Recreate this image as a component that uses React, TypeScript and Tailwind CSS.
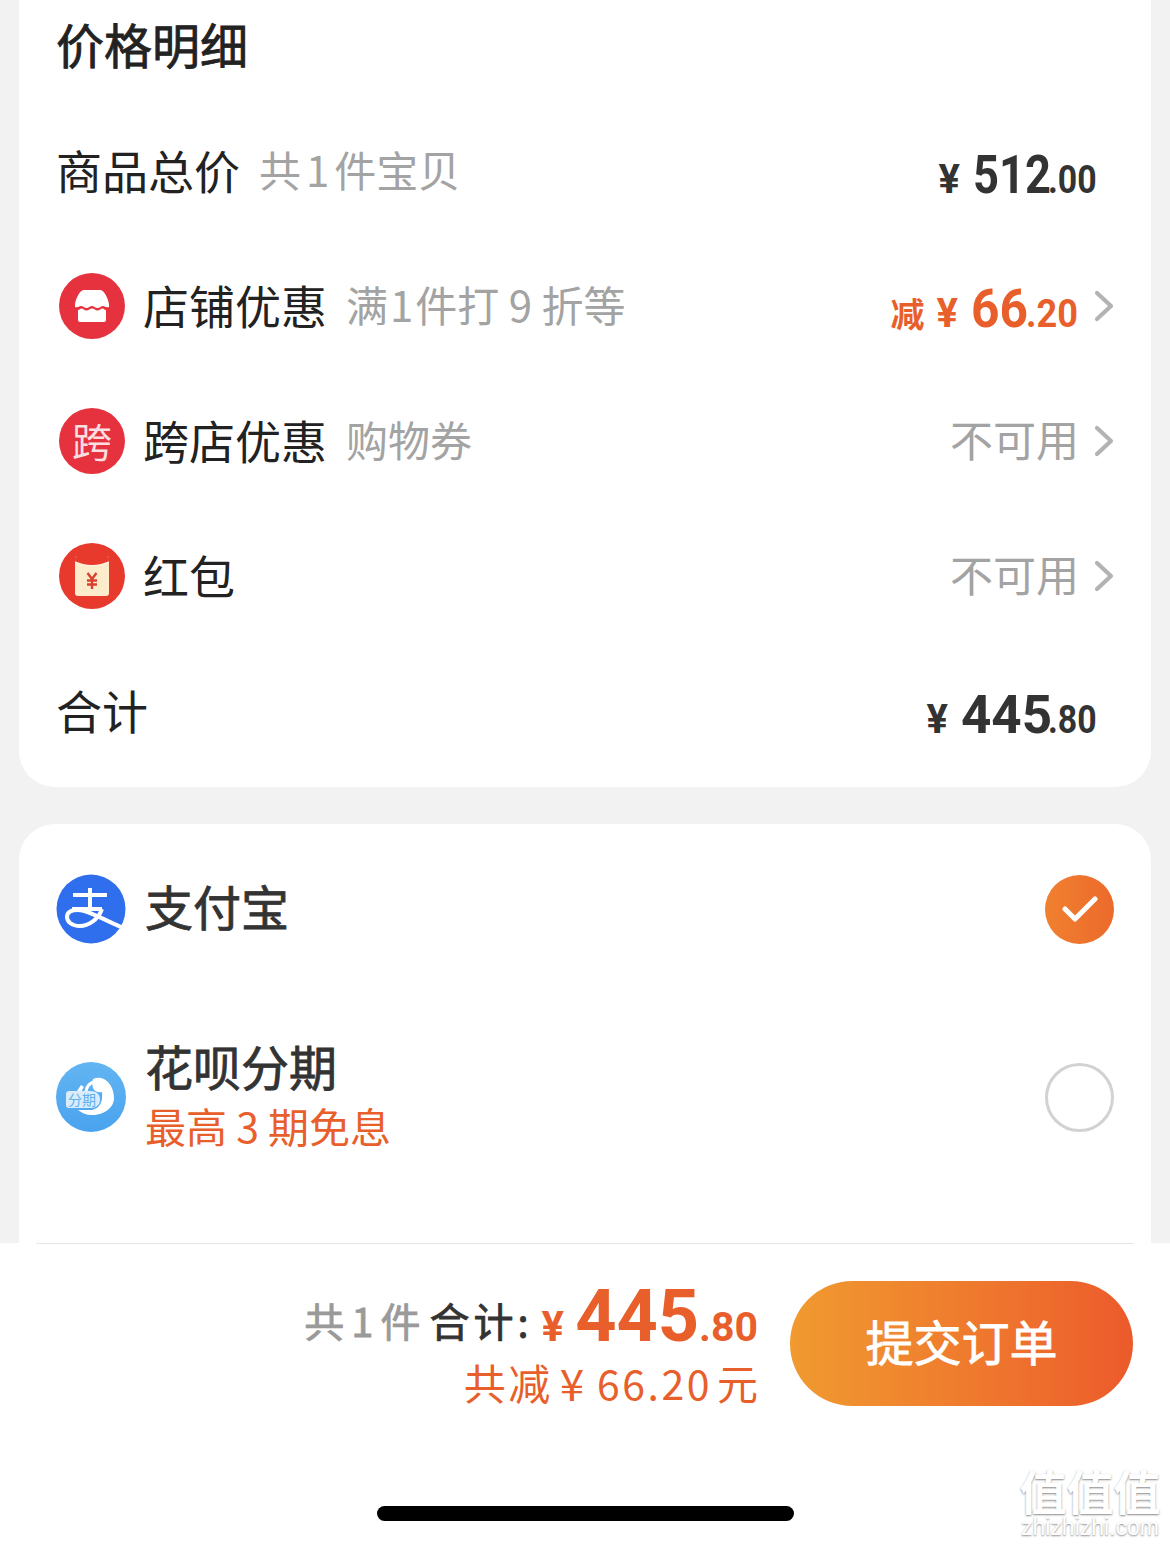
import React from "react";

const cjk = "font-['Noto_Sans_CJK_SC','Noto_Sans',sans-serif]";
const num = "font-['Roboto','Noto_Sans_CJK_SC',sans-serif]";
const medium = "[-webkit-text-stroke:0.8px_currentColor]";

const Chevron = () => (
  <svg width="20" height="32" viewBox="0 0 20 32" fill="none" className="ml-[15px]">
    <path d="M3 3l14 13L3 29" stroke="#b3b3b3" strokeWidth="4.200" strokeLinecap="round" strokeLinejoin="round" />
  </svg>
);

const ShopIcon = () => (
  <div className="w-[66px] h-[66px] rounded-full bg-[#e6323e] flex items-center justify-center">
    <svg width="34" height="32" viewBox="0 0 34 32">
      <path d="M9 0h16c4 0 8 8 9 14v3c-3 1-4-1-6-1s-3 2-5.500 2S19 16 17 16s-3.500 2-5.500 2S8 16 6 16s-3 2-6 1v-3C1 8 5 0 9 0z" fill="#fff" />
      <path d="M3 20c2 0 2-1.500 3.500-1.500s3 2 5 2 3.500-2 5.500-2 3.500 2 5.500 2 3.500-2 5-2 1.500 1.500 3.500 1.500v10a2 2 0 0 1-2 2H5a2 2 0 0 1-2-2z" fill="#fff" />
    </svg>
  </div>
);

const CrossIcon = () => (
  <div className="w-[66px] h-[66px] rounded-full bg-[#e6323e] flex items-center justify-center">
    <span className={`${cjk} pb-[2px] text-[40px] leading-none text-[#fbdfe0]`}>跨</span>
  </div>
);

const PacketIcon = () => (
  <div className="w-[66px] h-[66px] rounded-full bg-[#e8392d] flex items-center justify-center">
    <svg width="34" height="40" viewBox="0 0 34 40">
      <rect x="0" y="0" width="34" height="40" rx="3" fill="#fdeccb" />
      <path d="M0 3a3 3 0 0 1 3-3h28a3 3 0 0 1 3 3v3c-10 5-24 5-34 0z" fill="#e8392d" />
      <path d="M0 6c10 5 24 5 34 0" stroke="#fff3dd" strokeWidth="1.500" fill="none" />
      <path d="M12.500 17l4.500 6 4.500-6M12 24.500h10M12 28.500h10M17 23v10" stroke="#d9402e" strokeWidth="2.400" fill="none" />
    </svg>
  </div>
);

const AlipayIcon = () => (
  <svg width="70" height="70" viewBox="0 0 70 70">
    <circle cx="35" cy="35" r="34.500" fill="#2f6fed" />
    <path d="M17 21h34M34 14v21M16 35h30" stroke="#fff" strokeWidth="4" fill="none" />
    <path d="M46 35C42 46 32 52 24 52 15 52 11 47 11 43 11 38 16 36 22 36 32 36 44 44 65 53" stroke="#fff" strokeWidth="4" fill="none" />
  </svg>
);

const HuabeiIcon = () => (
  <div className="relative w-[70px] h-[70px] rounded-full bg-gradient-to-b from-[#62b5f2] to-[#4aa3ef] overflow-hidden">
    <svg width="70" height="70" viewBox="0 0 70 70" className="absolute inset-0">
      <path d="M37 17C49 12 58 24 58 36 58 46 48 53 36 53 30 53 26 51 22 48H36C44 46 47 40 46 30 42 31 38 29 37 26 36 23 36 20 37 17z" fill="#fff" />
      <path d="M30 29c1-5 4-8 8-9" stroke="#fff" strokeWidth="3" fill="none" strokeLinecap="round" />
      <path d="M21 29l4-6 3 2-3 5z" fill="#fff" />
      <path d="M13 29h22c5 0 9 3 9 8.500S40 46 35 46H13a3 3 0 0 1-3-3V32a3 3 0 0 1 3-3z" fill="#d8ecfb" />
    </svg>
    <span className={`${cjk} absolute left-[10px] top-[29px] w-[32px] text-center text-[14px] leading-[17px] text-[#5fb0ee]`}>分期</span>
  </div>
);

// digits in the reference are narrower than Roboto, so each part is squeezed to its width
const Part = ({ w, cls, children }: any) => (
  <span className={`inline-block whitespace-nowrap ${w}`}>
    <span className={`inline-block origin-left leading-none ${cls}`}>{children}</span>
  </span>
);

const Row = ({ icon, label, sub, right }: any) => (
  <div className="h-[135px] flex items-center justify-between pl-[40px] pr-[37px]">
    <div className="flex items-center">
      <div className="w-[84px]">{icon}</div>
      <span className={`${cjk} pb-[4px] text-[46px] leading-none text-[#222222]`}>{label}</span>
      {sub && <span className={`${cjk} pb-[4px] ml-[19px] text-[42px] leading-none text-[#a3a3a3]`}>{sub}</span>}
    </div>
    {right}
  </div>
);

const Unavailable = () => (
  <div className="flex items-center">
    <span className={`${cjk} pb-[4px] text-[43px] leading-none text-[#a3a3a3]`}>不可用</span>
    <Chevron />
  </div>
);

export default function App() {
  return (
    <div className="relative w-[1170px] h-[1545px] overflow-hidden bg-[#f2f2f2] flex flex-col">
      <div className="mx-[19px] h-[787px] shrink-0 bg-white rounded-b-[36px]">
        <div className={`${cjk} ${medium} h-[103px] pl-[37px] pt-[15px] text-[48px] leading-[56px] text-[#222222]`}>价格明细</div>

        <div className="h-[135px] flex items-center justify-between pl-[37px] pr-[53px]">
          <div className="flex items-center">
            <span className={`${cjk} pb-[4px] text-[46px] leading-none text-[#222222]`}>商品总价</span>
            <span className={`${cjk} pb-[4px] ml-[19px] text-[42px] leading-none text-[#a3a3a3]`}>
              共<span className="mx-[5px]">1</span>件宝贝
            </span>
          </div>
          <div className={`${num} flex items-baseline font-bold text-[#333333] pt-[8px]`}>
            <span className="text-[40px] leading-none mr-[13px]">¥</span>
            <Part w="w-[75px]" cls="text-[54px] scale-x-[0.84]">512</Part>
            <Part w="w-[50px]" cls="text-[38px] scale-x-[0.89]">.00</Part>
          </div>
        </div>

        <Row
          icon={<ShopIcon />}
          label="店铺优惠"
          sub={<>满<span className="mx-[2px]">1</span>件打 9 折等</>}
          right={
            <div className="flex items-center">
              <div className={`${num} flex items-baseline font-bold text-[#e85f2c] pt-[6px]`}>
                <span className={`${cjk} text-[34px] leading-none mr-[12px]`}>减</span>
                <span className="text-[40px] leading-none mr-[13px]">¥</span>
                <Part w="w-[55px]" cls="text-[54px] scale-x-[0.92]">66</Part>
                <Part w="w-[53px]" cls="text-[38px] scale-x-[0.95]">.20</Part>
              </div>
              <Chevron />
            </div>
          }
        />
        <Row icon={<CrossIcon />} label="跨店优惠" sub="购物券" right={<Unavailable />} />
        <Row icon={<PacketIcon />} label="红包" right={<Unavailable />} />

        <div className="h-[135px] flex items-center justify-between pl-[37px] pr-[53px]">
          <span className={`${cjk} pb-[4px] text-[46px] leading-none text-[#222222]`}>合计</span>
          <div className={`${num} flex items-baseline font-bold text-[#333333] pt-[8px]`}>
            <span className="text-[40px] leading-none mr-[13px]">¥</span>
            <Part w="w-[87px]" cls="text-[54px] scale-x-[0.98]">445</Part>
            <Part w="w-[50px]" cls="text-[38px] scale-x-[0.89]">.80</Part>
          </div>
        </div>
      </div>

      <div className="mx-[19px] mt-[37px] flex-1 bg-white rounded-t-[36px]">
        <div className="mt-[50px] flex items-center justify-between pl-[37px] pr-[37px]">
          <div className="flex items-center">
            <AlipayIcon />
            <span className={`${cjk} ${medium} pb-[8px] ml-[19px] text-[48px] leading-none text-[#333333]`}>支付宝</span>
          </div>
          <div className="w-[69px] h-[69px] rounded-full bg-gradient-to-r from-[#f08030] to-[#ec6a2b] flex items-center justify-center">
            <svg width="36" height="28" viewBox="0 0 36 28" fill="none">
              <path d="M3 14l10 10L33 4" stroke="#fff" strokeWidth="5" strokeLinecap="round" strokeLinejoin="round" />
            </svg>
          </div>
        </div>

        <div className="mt-[93px] flex items-center justify-between pl-[37px] pr-[37px]">
          <div className="flex items-center">
            <HuabeiIcon />
            <div className="ml-[19px] pb-[8px] flex flex-col">
              <span className={`${cjk} ${medium} text-[48px] leading-[56px] text-[#333333]`}>花呗分期</span>
              <span className={`${cjk} mt-[8px] text-[41px] leading-[48px] text-[#e85f2c]`}>最高 3 期免息</span>
            </div>
          </div>
          <div className="w-[69px] h-[69px] rounded-full border-[3px] border-[#d2d2d2]" />
        </div>
      </div>

      {/* bottom bar sits over the page */}
      <div className="absolute left-0 right-0 bottom-0 h-[302px] bg-white">
        <div className="mx-[36px] h-px bg-[#e6e6e6]" />
        <div className="mt-[37px] flex justify-end pr-[37px]">
          <div className="flex flex-col items-end mr-[32px]">
            <div className="h-[76px] flex items-baseline">
              <span className={`${cjk} ${medium} -translate-y-[4px] text-[40px] leading-none text-[#9a9a9a]`}>
                共<span className="mx-[7px]">1</span>件
              </span>
              <span className={`${cjk} ${medium} -translate-y-[4px] ml-[9px] tracking-[4px] text-[40px] leading-none text-[#333333]`}>合计:</span>
              <span className={`${num} ml-[9px] text-[42px] leading-none font-bold text-[#e85f2c]`}>¥</span>
              <span className={`${num} ml-[11px] text-[72px] leading-none font-bold text-[#e85f2c]`}>445</span>
              <span className={`${num} text-[41px] leading-none font-bold text-[#e85f2c]`}>.80</span>
            </div>
            <div className={`${cjk} mt-[-1px] h-[52px] flex items-center text-[41px] leading-none text-[#e85f2c]`}>
              <span className="text-[42px] tracking-[2.500px]">共减</span>
              <span className="ml-[7px] text-[44px]">¥</span>
              <span className="ml-[13px] tracking-[2.500px]">66.20</span>
              <span className="ml-[5px]">元</span>
            </div>
          </div>
          <div className="w-[343px] h-[125px] rounded-full bg-gradient-to-r from-[#f09a30] to-[#ec5a2b] flex items-center justify-center">
            <span className={`${cjk} ${medium} pb-[8px] text-[48px] leading-none text-white`}>提交订单</span>
          </div>
        </div>
      </div>

      <div className="absolute left-[377px] top-[1506px] w-[417px] h-[15px] rounded-full bg-black" />

      {/* watermark */}
      <div className="absolute left-[1018px] top-[1466px] w-[144px] flex flex-col items-center text-white text-shadow-[0_1px_2px_#8a8a8a]">
        <span className={`${cjk} text-[47px] leading-[48px] font-bold whitespace-nowrap`}>值值值</span>
        <span className="font-['Liberation_Sans',sans-serif] text-[23px] leading-[26px] whitespace-nowrap">zhizhizhi.com</span>
      </div>
    </div>
  );
}
